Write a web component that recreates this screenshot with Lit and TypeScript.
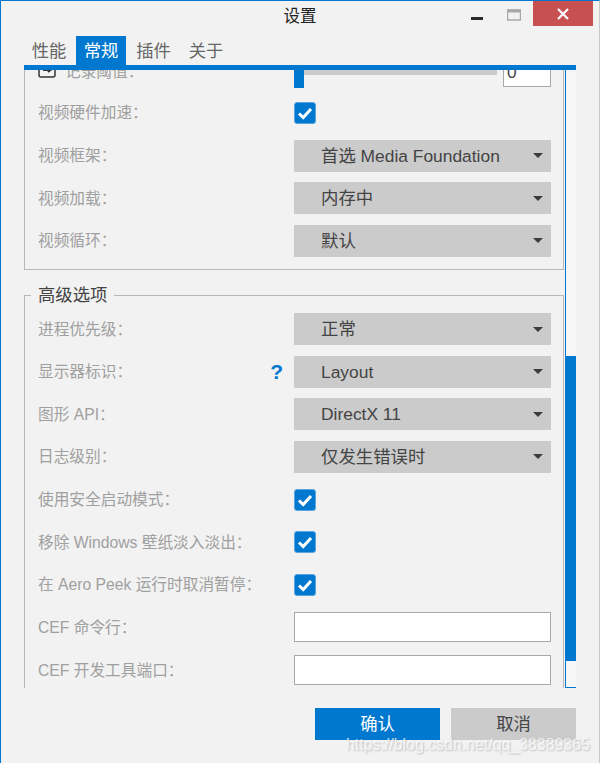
import { LitElement, html, css } from "lit";
import { customElement } from "lit/decorators.js";

type Row =
  | { label: string; kind: "select"; value: string; help?: boolean }
  | { label: string; kind: "check" }
  | { label: string; kind: "input" };

const groupOne: Row[] = [
  { label: "视频硬件加速：", kind: "check" },
  { label: "视频框架：", kind: "select", value: "首选 Media Foundation" },
  { label: "视频加载：", kind: "select", value: "内存中" },
  { label: "视频循环：", kind: "select", value: "默认" },
];
const groupTwo: Row[] = [
  { label: "进程优先级：", kind: "select", value: "正常" },
  { label: "显示器标识：", kind: "select", value: "Layout", help: true },
  { label: "图形 API：", kind: "select", value: "DirectX 11" },
  { label: "日志级别：", kind: "select", value: "仅发生错误时" },
  { label: "使用安全启动模式：", kind: "check" },
  { label: "移除 Windows 壁纸淡入淡出：", kind: "check" },
  { label: "在 Aero Peek 运行时取消暂停：", kind: "check" },
  { label: "CEF 命令行：", kind: "input" },
  { label: "CEF 开发工具端口：", kind: "input" },
];

@customElement("app-root")
export class AppRoot extends LitElement {
  static styles = css`
    :host {
      display: block;
      width: 600px;
      height: 763px;
      font-family: "Liberation Sans", "Noto Sans CJK SC", sans-serif;
    }
    .window {
      position: relative;
      box-sizing: border-box;
      width: 600px;
      height: 763px;
      background: #f2f2f2;
      border-top: 1px solid #0078d0;
      border-left: 1px solid #0078d0;
      border-right: 1px solid #c8c8c8;
      display: flex;
      flex-direction: column;
      overflow: hidden;
    }
    .titlebar {
      height: 35px;
      flex: none;
      position: relative;
    }
    .title {
      font-size: 16.5px;
      line-height: 30px;
      color: #222;
      text-align: center;
    }
    .controls {
      position: absolute;
      right: 6px;
      top: 0;
      display: flex;
      align-items: flex-start;
    }
    .ctl {
      width: 14px;
      height: 25px;
      display: block;
    }
    .ctl.min { margin-right: 23px; }
    .ctl.max { margin-right: 12px; }
    .close {
      width: 60px;
      height: 25px;
      background: #c75050;
      display: flex;
      align-items: center;
      justify-content: center;
    }
    .tabs {
      flex: none;
      height: 29px;
      margin-left: 23px;
      display: flex;
      align-items: stretch;
    }
    .tab {
      box-sizing: border-box;
      width: 50px;
      padding-top: 1px;
      text-align: center;
      font-size: 17.33px;
      line-height: 29px;
      color: #666;
    }
    .tab.sep { margin-left: 2px; }
    .tab.wide { width: 55px; }
    .tab.active {
      background: #0078d0;
      color: #fff;
    }
    .tabline {
      flex: none;
      height: 5px;
      margin: 0 23px;
      background: #0078d0;
      position: relative;
      z-index: 2;
    }
    .body {
      flex: none;
      height: 618px;
      margin-left: 23px;
      width: 552px;
      display: flex;
      overflow: hidden;
    }
    .pane {
      width: 541px;
      flex: none;
      overflow: hidden;
    }
    .scroller {
      margin-top: -100px;
    }
    .group {
      box-sizing: border-box;
      width: 540px;
      border: 1px solid #b8b8b8;
      position: relative;
      padding: 0 12px 0 13px;
    }
    .group.one {
      height: 300px;
      padding-top: 78px;
      margin-bottom: 25px;
    }
    .group.two {
      height: 500px;
      padding-top: 11.7px;
      border-bottom: none;
    }
    .legend {
      position: absolute;
      left: 6px;
      top: -12px;
      padding: 0 7px;
      background: #f2f2f2;
      font-size: 17.33px;
      line-height: 22px;
      color: #444;
    }
    .row {
      height: 42.65px;
      display: flex;
      align-items: center;
    }
    .label {
      box-sizing: border-box;
      width: 256px;
      flex: none;
      font-size: 15.7px;
      color: #a0a0a0;
      white-space: nowrap;
      display: flex;
      align-items: center;
      justify-content: space-between;
    }
    .label span:first-child {
      position: relative;
      top: -1px;
    }
    .help {
      color: #0078d0;
      font-family: "Liberation Sans", sans-serif;
      font-weight: 700;
      font-size: 21px;
      line-height: 20px;
      margin-right: 11px;
    }
    .select {
      box-sizing: border-box;
      width: 257px;
      height: 32px;
      background: #cbcbcb;
      color: #444;
      font-size: 17.4px;
      line-height: 30px;
      padding: 0 8px 0 27px;
      display: flex;
      align-items: center;
      justify-content: space-between;
      white-space: nowrap;
    }
    .arrow {
      width: 0;
      height: 0;
      border-left: 5px solid transparent;
      border-right: 5px solid transparent;
      border-top: 5px solid #3c3c3c;
    }
    .check {
      width: 22px;
      height: 22px;
      display: block;
    }
    .input {
      box-sizing: border-box;
      width: 257px;
      height: 30px;
      border: 1px solid #a8a8a8;
      background: #fff;
    }
    .threshold {
      display: flex;
      align-items: center;
      height: 42.65px;
    }
    .rec {
      width: 256px;
      flex: none;
      display: flex;
      align-items: center;
      gap: 9px;
      font-size: 15.7px;
      color: #a0a0a0;
      white-space: nowrap;
    }
    .rec svg { display: block; flex: none; }
    .slider {
      width: 203px;
      height: 36px;
      margin-right: 6px;
      flex: none;
      display: flex;
      align-items: center;
    }
    .slider .track {
      flex: 1;
      height: 10px;
      background: #cbcbcb;
    }
    .slider .thumb {
      width: 10px;
      height: 36px;
      background: #0078d0;
    }
    .num {
      box-sizing: border-box;
      width: 48px;
      height: 33px;
      border: 1px solid #a8a8a8;
      background: #fff;
      font-size: 17.33px;
      line-height: 35px;
      padding-left: 3px;
      color: #444;
    }
    .scrollbar {
      box-sizing: border-box;
      width: 11px;
      flex: none;
      border-left: 1px solid #0078d0;
      border-bottom: 1px solid #0078d0;
      background: #f6f6f6;
      padding-top: 286px;
    }
    .scrollbar .bar {
      height: 305px;
      margin-left: -1px;
      background: #0078d0;
    }
    .footer {
      flex: none;
      margin: 20px 23px 0 0;
      display: flex;
      justify-content: flex-end;
      gap: 11px;
    }
    .btn {
      width: 125px;
      height: 32px;
      font-size: 17.33px;
      line-height: 32px;
      text-align: center;
    }
    .btn.ok { background: #0078d0; color: #fff; }
    .btn.cancel { background: #cbcbcb; color: #444; }
    .watermark {
      position: absolute;
      left: 345px;
      top: 735px;
      font-size: 15.9px;
      line-height: 18px;
      color: rgba(255, 255, 255, 0.75);
      text-shadow: 1px 1px 2px rgba(120, 120, 120, 0.45);
      white-space: nowrap;
    }
  `;

  private checkbox() {
    return html`<svg class="check" viewBox="0 0 22 22">
      <rect x="0.5" y="0.5" width="21" height="21" rx="2.5" fill="#0078d0" stroke="#5aa5e0" />
      <path d="M5 11.5 L9.2 15.5 L17 7" fill="none" stroke="#fff" stroke-width="3" />
    </svg>`;
  }

  private row(r: Row) {
    return html`<div class="row">
      <div class="label">
        <span>${r.label}</span>
        ${r.kind === "select" && r.help ? html`<span class="help">?</span>` : ""}
      </div>
      ${r.kind === "select"
        ? html`<div class="select"><span>${r.value}</span><span class="arrow"></span></div>`
        : r.kind === "check"
          ? this.checkbox()
          : html`<div class="input"></div>`}
    </div>`;
  }

  render() {
    return html`<div class="window">
      <div class="titlebar">
        <div class="title">设置</div>
        <div class="controls">
          <svg class="ctl min" viewBox="0 0 14 25"><rect x="1" y="16" width="12" height="3" fill="#2a2a2a" /></svg>
          <svg class="ctl max" viewBox="0 0 14 25">
            <rect x="0.5" y="9" width="13" height="10" fill="none" stroke="#a8a8a8" stroke-width="1.5" />
            <rect x="0" y="8.5" width="14" height="3" fill="#a8a8a8" />
          </svg>
          <div class="close">
            <svg width="12" height="12" viewBox="0 0 12 12"><path d="M1 1 L11 11 M11 1 L1 11" stroke="#fff" stroke-width="2.2" /></svg>
          </div>
        </div>
      </div>
      <div class="tabs">
        <div class="tab">性能</div>
        <div class="tab sep active">常规</div>
        <div class="tab wide">插件</div>
        <div class="tab">关于</div>
      </div>
      <div class="tabline"></div>
      <div class="body">
        <div class="pane">
          <div class="scroller">
            <div class="group one">
              <div class="threshold">
                <div class="rec">
                  <svg width="18" height="16" viewBox="0 0 18 16">
                    <rect x="1" y="1" width="16" height="14" rx="2" fill="#f2f2f2" stroke="#333" stroke-width="1.5" />
                    <path d="M5 8 H12 M10 6 L12.5 8 L10 10" fill="none" stroke="#333" stroke-width="2" />
                  </svg>
                  <span>记录阈值：</span>
                </div>
                <div class="slider"><div class="thumb"></div><div class="track"></div></div>
                <div class="num">0</div>
              </div>
              ${groupOne.map((r) => this.row(r))}
            </div>
            <div class="group two">
              <div class="legend">高级选项</div>
              ${groupTwo.map((r) => this.row(r))}
            </div>
          </div>
        </div>
        <div class="scrollbar"><div class="bar"></div></div>
      </div>
      <div class="footer">
        <div class="btn ok">确认</div>
        <div class="btn cancel">取消</div>
      </div>
      <div class="watermark">https://blog.csdn.net/qq_38389365</div>
    </div>`;
  }
}
